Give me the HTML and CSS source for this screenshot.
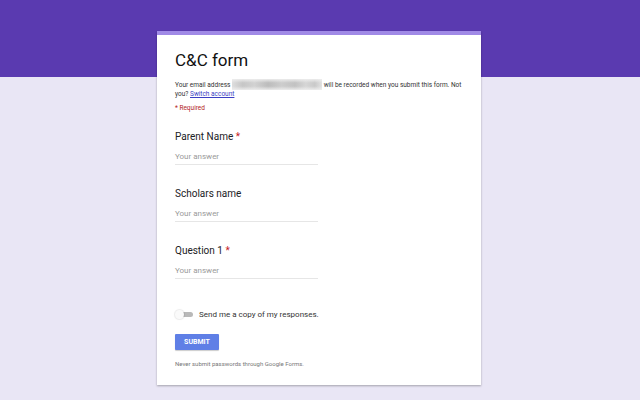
FILE: index.html
```html
<!DOCTYPE html>
<html>
<head>
  <meta charset="utf-8">
  <link rel="stylesheet" href="styles.css">
</head>
<body>
  <div class="form-card">
    <h1 class="form-title">C&amp;C form</h1>
    <p class="form-email">Your email address <span class="email-blur"></span> will be recorded when you submit this form. Not<br>you? <a href="#">Switch account</a></p>
    <p class="form-required">* Required</p>

    <div class="question">
      <div class="question-title">Parent Name <span class="star">*</span></div>
      <div class="answer">Your answer</div>
    </div>

    <div class="question">
      <div class="question-title">Scholars name</div>
      <div class="answer">Your answer</div>
    </div>

    <div class="question">
      <div class="question-title">Question 1 <span class="star">*</span></div>
      <div class="answer">Your answer</div>
    </div>

    <div class="copy-row">
      <span class="switch"><span class="switch-thumb"></span></span>
      <span class="copy-label">Send me a copy of my responses.</span>
    </div>

    <div class="submit-btn">SUBMIT</div>

    <p class="form-note">Never submit passwords through Google Forms.</p>
  </div>
</body>
</html>
```

FILE: styles.css
```css
/* page */

html, body {
  margin: 0;
  height: 100%;
}

body {
  background: linear-gradient(#5a3ab0 0, #5a3ab0 77px, #e9e6f5 77px);
  font-family: Roboto, "Liberation Sans", sans-serif;
  color: #202124;
  overflow: hidden;
}

/* card */

.form-card {
  width: 288px;
  margin: 31px auto 0;
  padding: 15px 18px 17px;
  background: #fff;
  border-top: 4px solid #a08ae6;
  box-shadow: 0 1px 2px rgba(0, 0, 0, 0.3);
  position: relative;
  left: -1px;
}

.form-title {
  margin: 0;
  font-size: 17px;
  line-height: 20px;
  font-weight: 400;
  color: #111;
}

.form-email {
  margin: 9px 0 0;
  font-size: 6.5px;
  line-height: 9px;
  color: #333;
  white-space: nowrap;
}

.form-email a {
  color: #3b3fc4;
}

.email-blur {
  display: inline-block;
  width: 90px;
  height: 11px;
  vertical-align: -3px;
  background:
    linear-gradient(rgba(240,240,240,.9), rgba(240,240,240,0) 35%, rgba(240,240,240,0) 65%, rgba(240,240,240,.9)),
    linear-gradient(90deg, #dedede, #c6c6c6 12%, #d2d2d2 25%, #bcbcbc 40%, #cdcdcd 55%, #c2c2c2 70%, #d6d6d6 82%, #c9c9c9 92%, #e2e2e2);
}

.form-required {
  margin: 5px 0 0;
  font-size: 6.5px;
  line-height: 9px;
  color: #b3261e;
}

/* questions */

.question {
  margin-top: 17px;
  margin-bottom: 22px;
}

.question + .question {
  margin-top: 22px;
}

.question-title {
  font-size: 10px;
  line-height: 14px;
  color: #202124;
}

.star {
  color: #c5221f;
}

.answer {
  width: 143px;
  margin-top: 7px;
  font-size: 8px;
  line-height: 12px;
  padding-bottom: 1px;
  color: #9a9a9a;
  border-bottom: 1px solid #e6e6e6;
}

/* send copy */

.copy-row {
  margin-top: 29px;
  display: flex;
  align-items: center;
  height: 12px;
}

.switch {
  position: relative;
  width: 12px;
  height: 5px;
  margin-left: 6px;
  border-radius: 3px;
  background: #b9b9b9;
}

.switch-thumb {
  position: absolute;
  left: -6px;
  top: -2px;
  width: 9px;
  height: 9px;
  border-radius: 50%;
  background: #fafafa;
  box-shadow: 0 0 1px 1px rgba(0, 0, 0, 0.08);
}

.copy-label {
  margin-left: 6px;
  font-size: 8px;
  color: #333;
}

.submit-btn {
  margin-top: 14px;
  width: 44px;
  height: 16px;
  line-height: 16px;
  text-align: center;
  background: #5f7fe6;
  color: #fff;
  font-size: 7px;
  font-weight: 700;
  border-radius: 1px;
  box-shadow: 0 1px 1px rgba(0, 0, 0, 0.2);
}

.form-note {
  margin: 10px 0 0;
  font-size: 6px;
  line-height: 8px;
  color: #777;
}
```
